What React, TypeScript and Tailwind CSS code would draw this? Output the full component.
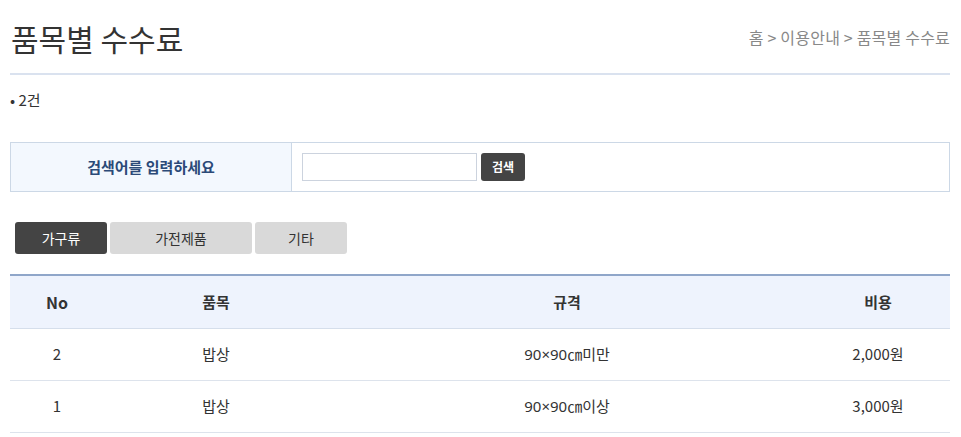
import React from "react";

const rows = [
  { no: 2, item: "밥상", size: "90×90", unit: "㎝미만", price: "2,000원" },
  { no: 1, item: "밥상", size: "90×90", unit: "㎝이상", price: "3,000원" },
];

const tabs = ["가구류", "가전제품", "기타"];

export default function App() {
  return (
    <div
      className="bg-white text-[#333] w-[961px] h-[437px] overflow-hidden"
      style={{ fontFamily: '"Noto Sans CJK KR", "Noto Sans", sans-serif' }}
    >
      <div className="ml-[10px] w-[940px]">
        {/* header */}
        <div className="flex items-center justify-between h-[75px] border-b-2 border-[#dae2ef]">
          <h1 className="text-[30px] leading-none pl-px pt-[3px]">품목별 수수료</h1>
          <div className="text-[16px] text-[#888] pt-px tracking-[0.2px]">홈 &gt; 이용안내 &gt; 품목별 수수료</div>
        </div>

        <div className="text-[15px] mt-[14px] h-[22px] leading-[22px]">• 2건</div>

        {/* search */}
        <div className="mt-[31px] flex h-[50px] border border-[#ccd8e6]">
          <div className="w-[281px] bg-[#f3f8fe] border-r border-[#ccd8e6] flex items-center justify-center text-[15px] font-bold text-[#2b4a78]">
            검색어를 입력하세요
          </div>
          <div className="flex items-center pl-[10px] gap-[4px]">
            <input className="w-[175px] h-[28px] border border-[#ccd3de] bg-white outline-none" />
            <button className="w-[44px] h-[28px] rounded-[3px] bg-[#444] text-white text-[12px] font-bold">
              검색
            </button>
          </div>
        </div>

        {/* tabs */}
        <div className="mt-[30px] ml-[5px] flex gap-[3px]">
          {tabs.map((t, i) => (
            <button
              key={t}
              className={`h-[32px] rounded-[3px] text-[14px] ${
                i === 0 ? "bg-[#444] text-white" : "bg-[#d9d9d9] text-[#333]"
              } ${i === 1 ? "w-[142px]" : "w-[92px]"}`}
            >
              {t}
            </button>
          ))}
        </div>

        {/* table */}
        <table className="mt-[20px] w-[940px] border-t-2 border-[#8fa6c9] border-collapse table-fixed text-[15px]">
          <colgroup>
            <col className="w-[94px]" />
            <col className="w-[224px]" />
            <col className="w-[478px]" />
            <col className="w-[144px]" />
          </colgroup>
          <thead>
            <tr className="bg-[#eef3fd] h-[53px] border-b border-[#d5deeb]">
              <th className="font-bold text-[16px]">No</th>
              <th className="font-bold">품목</th>
              <th className="font-bold">규격</th>
              <th className="font-bold">비용</th>
            </tr>
          </thead>
          <tbody>
            {rows.map((r) => (
              <tr key={r.no} className="h-[52px] border-b border-[#dde3ec]">
                <td className="text-center">{r.no}</td>
                <td className="text-center">{r.item}</td>
                <td className="text-center">
                  <span style={{ fontFamily: '"Noto Sans", sans-serif' }}>{r.size}</span>
                  {r.unit}
                </td>
                <td className="text-center">{r.price}</td>
              </tr>
            ))}
          </tbody>
        </table>
      </div>
    </div>
  );
}
